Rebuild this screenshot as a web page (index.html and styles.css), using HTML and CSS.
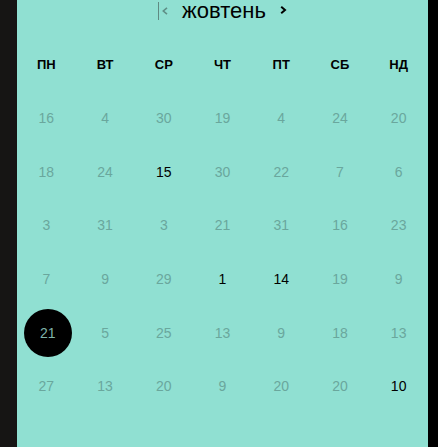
FILE: index.html
```html
<!DOCTYPE html>
<html lang="uk">
<head>
<meta charset="utf-8">
<link rel="stylesheet" href="styles.css">
</head>
<body>
<div class="frame">
  <div class="side-left"></div>
  <main class="calendar">
    <header class="cal-header">
      <button class="nav nav-prev" aria-label="попередній">
        <span class="cursor-bar"></span>
        <svg width="6" height="8" viewBox="0 0 6 8"><path d="M5 0.8 L1.3 4 L5 7.2" fill="none" stroke="#5f8f86" stroke-width="1.6"/></svg>
      </button>
      <h1 class="month">жовтень</h1>
      <button class="nav nav-next" aria-label="наступний">
        <svg width="7" height="8" viewBox="0 0 7 8"><path d="M1.2 0.8 L5 4 L1.2 7.2" fill="none" stroke="#000" stroke-width="2"/></svg>
      </button>
    </header>
    <div class="weekdays">
      <span>ПН</span><span>ВТ</span><span>СР</span><span>ЧТ</span><span>ПТ</span><span>СБ</span><span>НД</span>
    </div>
    <div class="days">
      <span>16</span><span>4</span><span>30</span><span>19</span><span>4</span><span>24</span><span>20</span>
      <span>18</span><span>24</span><span class="active">15</span><span>30</span><span>22</span><span>7</span><span>6</span>
      <span>3</span><span>31</span><span>3</span><span>21</span><span>31</span><span>16</span><span>23</span>
      <span>7</span><span>9</span><span>29</span><span class="active">1</span><span class="active">14</span><span>19</span><span>9</span>
      <span><b class="selected">21</b></span><span>5</span><span>25</span><span>13</span><span>9</span><span>18</span><span>13</span>
      <span>27</span><span>13</span><span>20</span><span>9</span><span>20</span><span>20</span><span class="active">10</span>
    </div>
  </main>
  <div class="side-right"></div>
</div>
</body>
</html>
```

FILE: styles.css
```css
* { box-sizing: border-box; }
html, body {
  margin: 0;
  padding: 0;
  height: 100%;
  background: #000;
  font-family: "Liberation Sans", Arial, sans-serif;
}
.frame {
  display: flex;
  height: 447px;
  overflow: hidden;
}
.side-left {
  width: 17px;
  flex: none;
  background: #161514;
}
.side-right {
  width: 10px;
  flex: none;
  background: #000;
}
.calendar {
  width: 411px;
  flex: none;
  background: #90e0d2;
  display: flex;
  flex-direction: column;
}
.cal-header {
  height: 37px;
  display: flex;
  align-items: flex-start;
  justify-content: center;
  gap: 14px;
}
.nav {
  border: 0;
  background: none;
  padding: 0;
  margin: 0;
  display: flex;
  align-items: center;
  cursor: pointer;
}
.nav-prev {
  height: 22px;
  gap: 3px;
}
.cursor-bar {
  display: block;
  width: 1px;
  height: 18px;
  background: #5f8a82;
}
.nav-next {
  height: 20px;
}
.month {
  margin: 0;
  font-size: 22px;
  font-weight: 400;
  line-height: 22px;
  color: #000;
}
.weekdays {
  display: grid;
  grid-template-columns: repeat(7, 1fr);
  height: 54px;
}
.weekdays span {
  display: flex;
  align-items: center;
  justify-content: center;
  font-size: 13px;
  font-weight: 700;
  color: #000;
}
.days {
  display: grid;
  grid-template-columns: repeat(7, 1fr);
  grid-auto-rows: 53.7px;
}
.days span {
  display: flex;
  align-items: center;
  justify-content: center;
  font-size: 14px;
  color: #6aa79d;
}
.days span.active {
  color: #000;
}
.selected {
  display: flex;
  align-items: center;
  justify-content: center;
  width: 48px;
  height: 48px;
  border-radius: 50%;
  background: #000;
  color: #7fb3aa;
  font-weight: 400;
  margin-left: 3px;
}
```
